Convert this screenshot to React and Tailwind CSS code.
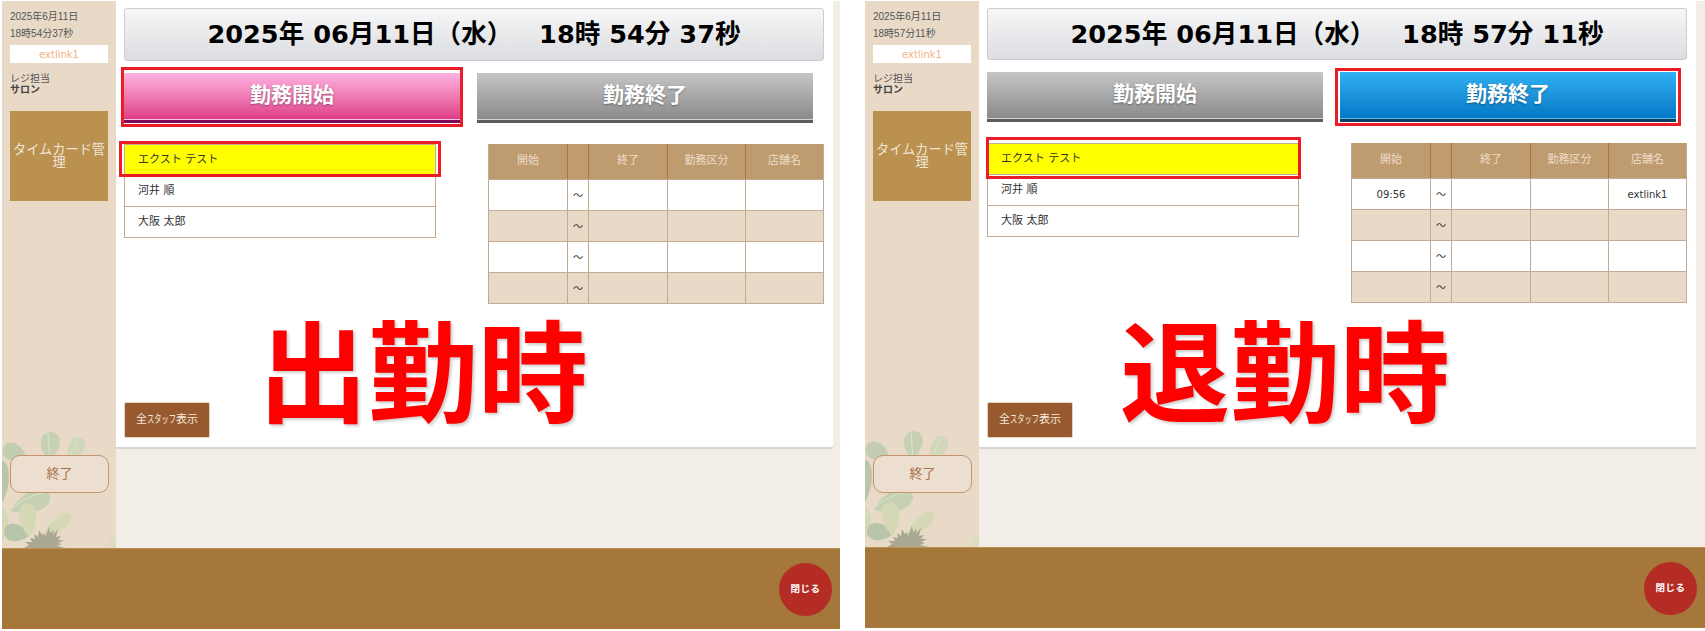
function Plant() {
  const leaves = [
    [48, 26, 11, 14, 6, "#c6d1b4"],
    [73, 30, 9, 14, 28, "#d0d7bb"],
    [13, 33, 10, 13, -65, "#c2cdb2"],
    [0, 62, 8, 21, 0, "#bac5a9"],
    [28, 83, 12, 21, 68, "#c6d1b4"],
    [0, 105, 7, 16, 0, "#d5d8b5"],
    [15, 113, 10, 13, -80, "#b9c5aa"],
    [26, 100, 10, 17, -4, "#d5d8b5"],
    [55, 105, 8, 17, 50, "#d5d8b5"],
    [110, 125, 5, 7, 30, "#dcdcc0"],
  ];
  return (
    <svg className="absolute left-0 bottom-0 pointer-events-none" width="114" height="128" viewBox="0 0 114 128">
      {leaves.map(([cx, cy, rx, ry, r, c], i) => (
        <path
          key={i}
          d={`M0 ${ry} C ${-rx * 1.3} ${ry * 0.1} ${-rx} ${-ry} 0 ${-ry} C ${rx} ${-ry} ${rx * 1.3} ${ry * 0.1} 0 ${ry} Z`}
          fill={c}
          transform={`translate(${cx} ${cy}) rotate(${r})`}
        />
      ))}
      <path d="M0 98 Q20 75 46 72 M10 128 Q30 118 58 96 M48 38 L46 14 M66 40 L76 18" stroke="#dfe2c8" strokeWidth="1" fill="none" />
      <path d="M22 128 L27 125 L23 122 L30 122 L28 118 L33 119 L32 114 L36 117 L37 110 L40 115 L42 113 L43 117 L47 107 L48 113 L52 110 L51 115 L56 109 L54 117 L59 116 L56 120 L62 120 L56 123 L60 124 L55 126 L64 128 Z" fill="#aaa890" />
    </svg>
  );
}

const btnTone = {
  pink: { grad: "from-[#fdb2e3] to-[#dd3b88]", line: "bg-[#f6c6e2]", dark: "bg-[#7d0a58]" },
  gray: { grad: "from-[#c6c6c6] to-[#8b8b8b]", line: "bg-[#d4d4d4]", dark: "bg-[#5c5c5c]" },
  blue: { grad: "from-[#30b0f2] to-[#0378c6]", line: "bg-[#5db8e6]", dark: "bg-[#0c3f60]" },
};

function WorkButton({ label, tone, outline }) {
  const t = btnTone[tone];
  return (
    <div className="relative w-[336px] h-[50px] flex flex-col">
      <div className={`flex-1 flex items-center justify-center bg-gradient-to-b ${t.grad} text-white text-[21px] font-bold [text-shadow:0_1px_2px_rgba(0,0,0,0.35)]`}>
        {label}
      </div>
      <div className={`h-px ${t.line}`} />
      <div className={`h-[3px] ${t.dark}`} />
      {outline && <div className={`absolute border-[3px] border-[#ed1c24] ${outline}`} />}
    </div>
  );
}

function Cell({ children, w }) {
  return <div className={`${w} flex items-center justify-center text-[10px] text-[#333] border-r border-[#c2ab90] last:border-r-0`}>{children}</div>;
}

const cols = ["w-[79px] shrink-0", "w-[21px] shrink-0", "w-[79px] shrink-0", "w-[78px] shrink-0", "flex-1"];

function TimeTable({ first }) {
  const head = ["開始", "", "終了", "勤務区分", "店舗名"];
  return (
    <div className="w-[336px] h-fit border border-[#c2ab90] border-t-0">
      <div className="flex h-[35px] bg-[#bf9b70]">
        {head.map((h, i) => (
          <div key={i} className={`${cols[i]} flex items-center justify-center text-[11px] text-[#ecdcc8] border-r border-[#a5773b] last:border-r-0`}>{h}</div>
        ))}
      </div>
      {[0, 1, 2, 3].map((r) => (
        <div key={r} className={`flex h-[31px] border-t border-[#c2ab90] ${r % 2 ? "bg-[#e9dac8]" : "bg-white"}`}>
          <Cell w={cols[0]}>{r === 0 ? first[0] : ""}</Cell>
          <Cell w={cols[1]}>～</Cell>
          <Cell w={cols[2]} />
          <Cell w={cols[3]} />
          <Cell w={cols[4]}>{r === 0 ? first[1] : ""}</Cell>
        </div>
      ))}
    </div>
  );
}

function Panel({ date, time, clock, clockH, startTone, endTone, startOutline, endOutline, listOutline, first, big, bigPos, bodyH }) {
  return (
    <div className="relative flex flex-col">
      <div className={`flex ${bodyH} bg-[#f2ede7]`}>
        <aside className="relative w-[114px] shrink-0 bg-[#e9dac8] px-2 pt-[7px] overflow-hidden">
          <Plant />
          <div className="relative text-[10px] leading-[17px] text-[#555] font-['Liberation_Sans','Noto_Sans_CJK_JP',sans-serif]">
            <div>{date}</div>
            <div>{time}</div>
          </div>
          <div className="relative mt-[3px] h-[18px] w-[98px] bg-white flex items-center justify-center text-[10px] text-[#f4b183]">extlink1</div>
          <div className="relative mt-[10px] text-[10px] leading-[11px] text-[#555]">
            <div>レジ担当</div>
            <div className="font-bold text-[#444]">サロン</div>
          </div>
          <div className="relative mt-[16px] h-[90px] w-[98px] bg-[#bb914f] flex items-center justify-center text-center text-[13.2px] leading-[13px] text-[#efe6d6]">
            タイムカード管理
          </div>
          <div className="absolute left-2 top-[454px] w-[99px] h-[38px] rounded-[10px] border-[1.5px] border-[#c4946a] bg-[#ecdfcf] flex items-center justify-center text-[13px] text-[#a9714a]">
            終了
          </div>
        </aside>
        <main className="relative w-[717px] self-start h-[448px] bg-white border-b-2 border-[#d6d6d6] pl-2 pr-[9px] pt-[7px]">
          <div className={`${clockH} rounded-[3px] border border-[#c9ccd2] bg-gradient-to-b from-[#f7f7f8] to-[#dcdde1] flex items-center justify-center text-[25.6px] font-bold text-black whitespace-pre`}>
            {clock}
          </div>
          <div className="flex gap-[17px] mt-3">
            <WorkButton label="勤務開始" tone={startTone} outline={startOutline} />
            <WorkButton label="勤務終了" tone={endTone} outline={endOutline} />
          </div>
          <div className="flex gap-[52px] mt-[21px]">
            <div className="relative w-[312px] h-fit border border-[#c2ab90] border-t-0">
              <div className="h-[31px] bg-[#ffff00] flex items-center pl-[13px] text-[11px] text-[#333] border-t border-[#c2ab90]">エクスト テスト</div>
              <div className="h-[31px] bg-white flex items-center pl-[13px] text-[11px] text-[#333] border-t border-[#c2ab90]">河井 順</div>
              <div className="h-[31px] bg-white flex items-center pl-[13px] text-[11px] text-[#333] border-t border-[#c2ab90]">大阪 太郎</div>
              <div className={`absolute border-[3px] border-[#ed1c24] ${listOutline}`} />
            </div>
            <TimeTable first={first} />
          </div>
          <div className="absolute left-[8px] top-[401px] w-[86px] h-[36px] rounded-[2px] bg-[#975a2f] border border-[#e3d3c2] flex items-center justify-center text-[11px] text-[#f5eadf] whitespace-nowrap">
            全<span className="inline-block w-[29px] origin-left scale-x-[0.66]">スタッフ</span>表示
          </div>
          <div className={`absolute text-[#ff0000] text-[110px] leading-none font-bold [text-shadow:2px_2px_3px_rgba(0,0,0,0.2)] whitespace-nowrap ${bigPos}`}>
            {big}
          </div>
        </main>
        <div className="flex-1" />
      </div>
      <footer className="relative h-[81px] bg-[#a5773b] border-t border-[#bb914f]">
        <div className="absolute right-[8px] top-[14px] w-[53px] h-[53px] rounded-full bg-[#b42c24] flex items-center justify-center text-[9.5px] font-bold text-white tracking-[0.5px]">
          閉じる
        </div>
      </footer>
    </div>
  );
}

export default function App() {
  return (
    <div className="w-[1705px] h-[631px] bg-white flex pl-[2px] pt-px gap-[25px] overflow-hidden font-['DejaVu_Sans','Noto_Sans_CJK_JP',sans-serif]">
      <div className="w-[838px]">
        <Panel
          date="2025年6月11日"
          time="18時54分37秒"
          clock={"2025年 06月11日（水）   18時 54分 37秒"}
          clockH="h-[53px]"
          startTone="pink"
          endTone="gray"
          startOutline="-left-[3px] -right-[3px] -top-[6px] -bottom-[4px]"
          listOutline="-left-[6px] -right-[6px] -top-[3px] bottom-[60px]"
          first={["", ""]}
          big="出勤時"
          bigPos="left-[142px] top-[320px]"
          bodyH="h-[547px]"
        />
      </div>
      <div className="w-[840px]">
        <Panel
          date="2025年6月11日"
          time="18時57分11秒"
          clock={"2025年 06月11日（水）   18時 57分 11秒"}
          clockH="h-[52px]"
          startTone="gray"
          endTone="blue"
          endOutline="-left-[5px] -right-[5px] -top-[4px] -bottom-[4px]"
          listOutline="-left-[2px] -right-[3px] -top-[6px] bottom-[57px]"
          first={["09:56", "extlink1"]}
          big="退勤時"
          bigPos="left-[141px] top-[320px]"
          bodyH="h-[546px]"
        />
      </div>
    </div>
  );
}
